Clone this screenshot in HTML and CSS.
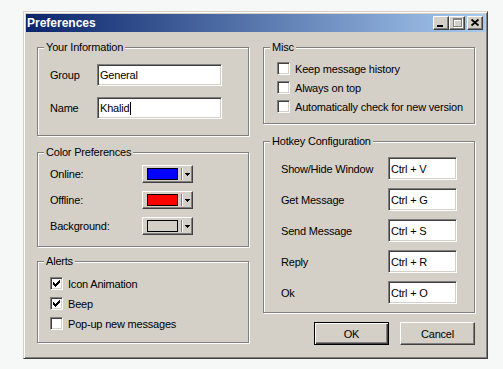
FILE: index.html
```html
<!DOCTYPE html>
<html>
<head>
    <title>Preferences</title>
    <link rel="stylesheet" href="styles.css">
</head>
<body>
    <div class="window">
        <div class="titlebar">
            <span class="title">Preferences</span>
            <div class="caption-buttons">
                <button class="caption-btn">
                    <svg width="14" height="12" viewBox="0 0 14 12" shape-rendering="crispEdges"><rect x="3" y="8" width="6" height="2" fill="#000"/></svg>
                </button>
                <button class="caption-btn">
                    <svg width="14" height="12" viewBox="0 0 14 12" shape-rendering="crispEdges">
                        <path d="M4 2h9v9h-9z M5 4v6h7v-6z" fill="#fff" fill-rule="evenodd"/>
                        <path d="M3 1h9v9h-9z M4 3v6h7v-6z" fill="#808080" fill-rule="evenodd"/>
                    </svg>
                </button>
                <button class="caption-btn close">
                    <svg width="14" height="12" viewBox="0 0 14 12"><path d="M3.5 2.5L10.5 8.5M10.5 2.5L3.5 8.5" stroke="#000" stroke-width="1.7"/></svg>
                </button>
            </div>
        </div>

        <div class="dialog">
            <div class="column">
                <fieldset class="group info">
                    <legend>Your Information</legend>
                    <div class="rows">
                        <div class="field-row"><label>Group</label><div class="textbox">General</div></div>
                        <div class="field-row"><label>Name</label><div class="textbox">Khalid<span class="caret"></span></div></div>
                    </div>
                </fieldset>

                <fieldset class="group colors">
                    <legend>Color Preferences</legend>
                    <div class="rows">
                        <div class="field-row">
                            <label>Online:</label>
                            <div class="color-btn"><span class="swatch" style="background-color: #0000ff;"></span><span class="sep"></span><svg class="arrow" width="5" height="3" viewBox="0 0 5 3" shape-rendering="crispEdges"><path d="M0 0h5v1h-1v1h-1v1h-1v-1h-1v-1h-1z" fill="#000"/></svg></div>
                        </div>
                        <div class="field-row">
                            <label>Offline:</label>
                            <div class="color-btn"><span class="swatch" style="background-color: #ff0000;"></span><span class="sep"></span><svg class="arrow" width="5" height="3" viewBox="0 0 5 3" shape-rendering="crispEdges"><path d="M0 0h5v1h-1v1h-1v1h-1v-1h-1v-1h-1z" fill="#000"/></svg></div>
                        </div>
                        <div class="field-row">
                            <label>Background:</label>
                            <div class="color-btn"><span class="swatch" style="background-color: #d4d0c8;"></span><span class="sep"></span><svg class="arrow" width="5" height="3" viewBox="0 0 5 3" shape-rendering="crispEdges"><path d="M0 0h5v1h-1v1h-1v1h-1v-1h-1v-1h-1z" fill="#000"/></svg></div>
                        </div>
                    </div>
                </fieldset>

                <fieldset class="group alerts">
                    <legend>Alerts</legend>
                    <div class="rows">
                        <div class="check-row"><span class="checkbox"><svg width="11" height="11" viewBox="0 0 11 11" shape-rendering="crispEdges"><path d="M2 4v3h1v1h1v1h1v-1h1v-1h1v-1h1v-1h1v-3h-1v1h-1v1h-1v1h-1v1h-1v-1h-1v-1z" fill="#000"/></svg></span>Icon Animation</div>
                        <div class="check-row"><span class="checkbox"><svg width="11" height="11" viewBox="0 0 11 11" shape-rendering="crispEdges"><path d="M2 4v3h1v1h1v1h1v-1h1v-1h1v-1h1v-1h1v-3h-1v1h-1v1h-1v1h-1v1h-1v-1h-1v-1z" fill="#000"/></svg></span>Beep</div>
                        <div class="check-row"><span class="checkbox"></span>Pop-up new messages</div>
                    </div>
                </fieldset>
            </div>

            <div class="column">
                <fieldset class="group misc">
                    <legend>Misc</legend>
                    <div class="rows">
                        <div class="check-row"><span class="checkbox"></span>Keep message history</div>
                        <div class="check-row"><span class="checkbox"></span>Always on top</div>
                        <div class="check-row"><span class="checkbox"></span>Automatically check for new version</div>
                    </div>
                </fieldset>

                <fieldset class="group hotkeys">
                    <legend>Hotkey Configuration</legend>
                    <div class="rows">
                        <div class="field-row"><label>Show/Hide Window</label><div class="textbox">Ctrl + V</div></div>
                        <div class="field-row"><label>Get Message</label><div class="textbox">Ctrl + G</div></div>
                        <div class="field-row"><label>Send Message</label><div class="textbox">Ctrl + S</div></div>
                        <div class="field-row"><label>Reply</label><div class="textbox">Ctrl + R</div></div>
                        <div class="field-row"><label>Ok</label><div class="textbox">Ctrl + O</div></div>
                    </div>
                </fieldset>

                <div class="button-row">
                    <button class="btn default">OK</button>
                    <button class="btn">Cancel</button>
                </div>
            </div>
        </div>
    </div>
</body>
</html>
```

FILE: styles.css
```css
body {
    margin: 0;
    background-color: #f5f8f7;
    font-family: "Liberation Sans", Arial, sans-serif;
    font-size: 11px;
    letter-spacing: -0.2px;
    color: #000;
}
.window {
    box-sizing: border-box;
    width: 465px;
    height: 348px;
    margin: 11px 0 0 23px;
    padding: 2px;
    background-color: #d4d0c8;
    border: 1px solid;
    border-color: #d4d0c8 #404040 #404040 #d4d0c8;
    box-shadow: inset 1px 1px 0 #fff, inset -1px -1px 0 #808080;
}
.titlebar {
    height: 18px;
    display: flex;
    align-items: center;
    justify-content: space-between;
    padding: 0 2px 0 1px;
    background: linear-gradient(to right, #0a246a, #a6caf0);
}
.title {
    font-weight: bold;
    font-size: 12px;
    letter-spacing: 0;
    color: #fff;
}
.caption-buttons {
    display: flex;
}
.caption-btn {
    box-sizing: border-box;
    width: 16px;
    height: 14px;
    padding: 0;
    display: flex;
    background-color: #d4d0c8;
    border: 1px solid;
    border-color: #fff #404040 #404040 #fff;
    box-shadow: inset -1px -1px 0 #808080;
}
.caption-btn.close {
    margin-left: 2px;
}
.dialog {
    display: flex;
    gap: 14px;
    padding: 9px 0 0 11px;
}
.column {
    width: 212px;
    display: flex;
    flex-direction: column;
}
.group {
    margin: 0;
    padding: 0 0 0 6px;
    min-width: 0;
    border: 1px solid #808080;
    box-shadow: 1px 1px 0 #fff, inset 1px 1px 0 #fff;
}
.group legend {
    padding: 0 2px;
    line-height: 13px;
    background-color: #d4d0c8;
}
.rows {
    display: flex;
    flex-direction: column;
}
.field-row {
    display: flex;
    align-items: center;
    white-space: nowrap;
}
.textbox {
    box-sizing: border-box;
    height: 100%;
    display: flex;
    align-items: center;
    padding: 0 2px;
    background-color: #fff;
    border: 1px solid;
    border-color: #808080 #fff #fff #808080;
    box-shadow: inset 1px 1px 0 #404040, inset -1px -1px 0 #d4d0c8;
}
.caret {
    width: 1px;
    height: 13px;
    margin-left: 1px;
    background-color: #000;
}

/* Your Information */
.info .rows {
    padding: 10px 0 16px 6px;
    gap: 11px;
}
.info .field-row {
    height: 22px;
}
.info label {
    width: 47px;
}
.info .textbox {
    width: 125px;
}

/* Color Preferences */
.colors {
    margin-top: 10px;
}
.colors .rows {
    padding: 6px 0 11px 6px;
    gap: 8px;
}
.colors .field-row {
    height: 18px;
}
.colors label {
    width: 92px;
}
.color-btn {
    box-sizing: border-box;
    width: 51px;
    height: 18px;
    display: flex;
    align-items: center;
    padding-left: 4px;
    background-color: #d4d0c8;
    border: 1px solid;
    border-color: #fff #404040 #404040 #fff;
    box-shadow: inset -1px -1px 0 #808080;
}
.swatch {
    box-sizing: border-box;
    width: 31px;
    height: 12px;
    border: 1px solid #000;
}
.sep {
    box-sizing: border-box;
    width: 2px;
    height: 12px;
    margin-left: 3px;
    border-left: 1px solid #808080;
    border-right: 1px solid #fff;
}
.arrow {
    margin-left: 2px;
}

/* checkboxes */
.check-row {
    display: flex;
    align-items: center;
    height: 13px;
    white-space: nowrap;
}
.checkbox {
    box-sizing: border-box;
    width: 13px;
    height: 13px;
    margin-right: 5px;
    display: flex;
    background-color: #fff;
    border: 1px solid;
    border-color: #808080 #fff #fff #808080;
    box-shadow: inset 1px 1px 0 #404040, inset -1px -1px 0 #d4d0c8;
}
.alerts {
    margin-top: 8px;
}
.alerts .rows {
    padding: 9px 0 12px 6px;
    gap: 7px;
}
.misc .rows {
    padding: 8px 0 10px 7px;
    gap: 6px;
}

/* Hotkey Configuration */
.hotkeys {
    margin-top: 11px;
}
.hotkeys .rows {
    padding: 9px 0 8px 11px;
    gap: 8px;
}
.hotkeys .field-row {
    height: 23px;
}
.hotkeys label {
    width: 107px;
}
.hotkeys .textbox {
    width: 69px;
}

.button-row {
    display: flex;
    justify-content: flex-end;
    gap: 11px;
    margin-top: 9px;
}
.btn {
    box-sizing: border-box;
    width: 75px;
    height: 23px;
    padding: 0;
    font-family: inherit;
    font-size: 11px;
    letter-spacing: -0.2px;
    color: #000;
    background-color: #d4d0c8;
    border: 1px solid;
    border-color: #fff #404040 #404040 #fff;
    box-shadow: inset -1px -1px 0 #808080;
}
.btn.default {
    border-color: #000;
    box-shadow: inset 1px 1px 0 #fff, inset -1px -1px 0 #404040, inset -2px -2px 0 #808080;
}
```
